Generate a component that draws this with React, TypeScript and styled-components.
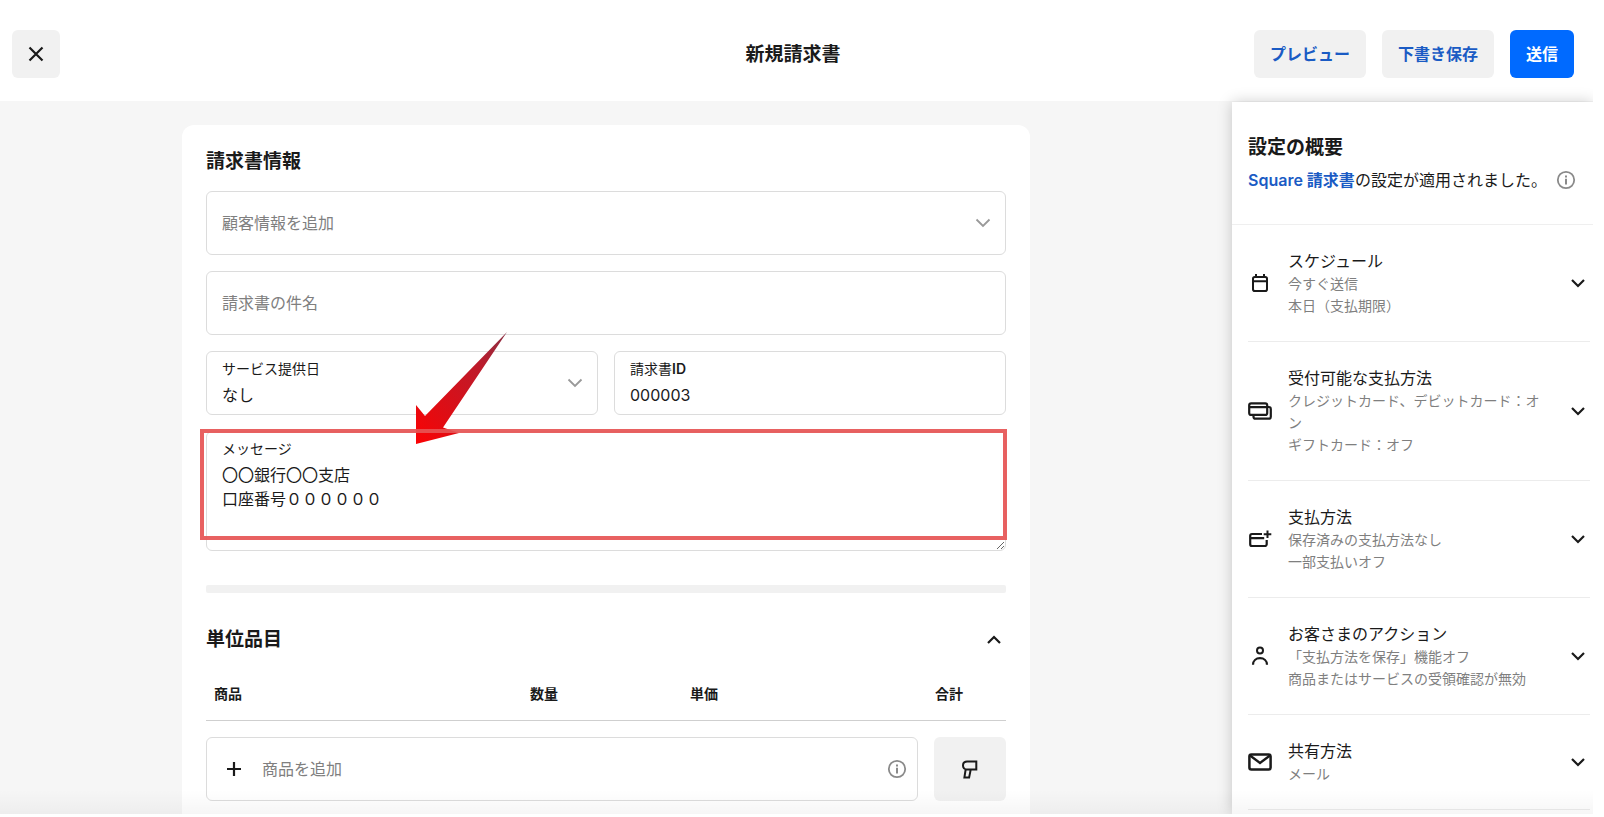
import React from "react";
import styled, { createGlobalStyle, css } from "styled-components";

const ink = "#1a1a1a";
const muted = "#7f7f7f";
const line = "#dcdcdc";
const link = "#1a5bc4";

const GlobalStyle = createGlobalStyle`
  *, *::before, *::after { box-sizing: border-box; }
  body {
    margin: 0;
    background: #fff;
    color: ${ink};
    font-family: Inter, "Noto Sans CJK JP", sans-serif;
    font-size: 16px;
    line-height: 24px;
  }
  h1, h2, p { margin: 0; }
  button, input, select, textarea { font: inherit; color: inherit; }
`;

const Page = styled.div`
  position: relative;
  display: flex;
  flex-direction: column;
  height: calc(100vh - 3px);
  margin-right: 11px;
  overflow: hidden;
`;

const Header = styled.header`
  display: grid;
  grid-template-columns: 1fr auto 1fr;
  align-items: center;
  flex: none;
  padding: 30px 19px 23px 12px;
`;

const Title = styled.h1`
  padding-top: 2px;
  font-size: 19px;
  font-weight: 700;
  line-height: 28px;
`;

const Actions = styled.div`
  display: flex;
  justify-content: flex-end;
  gap: 16px;
`;

const Button = styled.button<{ $primary?: boolean; $square?: boolean }>`
  display: flex;
  align-items: center;
  justify-content: center;
  height: 48px;
  padding: 0 16px;
  border: 0;
  border-radius: 6px;
  background: ${(p) => (p.$primary ? "#006aff" : "#f1f1f1")};
  color: ${(p) => (p.$primary ? "#fff" : link)};
  font-weight: 600;
  white-space: nowrap;
  ${(p) =>
    p.$square &&
    css`
      width: 48px;
      padding: 0;
      color: ${ink};
    `}
`;

const Body = styled.div`
  display: flex;
  flex: 1;
  min-height: 0;
  background: #f6f6f6;
`;

const Main = styled.main`
  flex: 1;
  min-width: 0;
  padding: 24px 20px 0 0;
`;

const Card = styled.div`
  max-width: 848px;
  min-height: 100%;
  margin: 0 auto;
  padding: 24px;
  border-radius: 12px;
  background: #fff;
`;

const SectionTitle = styled.h2`
  font-size: 19px;
  font-weight: 700;
  line-height: 26px;
`;

const Fields = styled.div`
  display: grid;
  grid-template-columns: 1fr 1fr;
  gap: 16px;
  margin-top: 16px;
`;

const Field = styled.div<{ $wide?: boolean }>`
  display: flex;
  align-items: center;
  grid-column: ${(p) => (p.$wide ? "1 / -1" : "auto")};
  height: 64px;
  padding: 0 14px 0 15px;
  border: 1px solid ${line};
  border-radius: 6px;
  background: #fff;
`;

const FieldText = styled.div`
  display: flex;
  flex: 1;
  flex-direction: column;
  gap: 4px;
  min-width: 0;
`;

const Label = styled.label`
  font-size: 14px;
  line-height: 20px;
`;

const LabelAccent = styled.span`
  font-weight: 600;
`;

const control = css`
  width: 100%;
  height: 24px;
  padding: 0;
  border: 0;
  outline: 0;
  background: transparent;
  line-height: 24px;
`;

const Input = styled.input`
  ${control}
  &::placeholder { color: ${muted}; opacity: 1; }
`;

const Select = styled.select<{ $empty?: boolean }>`
  ${control}
  appearance: none;
  color: ${(p) => (p.$empty ? muted : ink)};
`;

const MessageField = styled.div`
  position: relative;
  display: flex;
  flex-direction: column;
  grid-column: 1 / -1;
  padding-top: 7px;
  border: 1px solid ${line};
  border-radius: 6px;
`;

const MessageLabel = styled(Label)`
  padding: 0 15px;
`;

const Textarea = styled.textarea`
  display: block;
  width: 100%;
  height: 91px;
  padding: 4px 15px;
  border: 0;
  outline: 0;
  background: transparent;
  line-height: 24px;
  resize: vertical;
`;

const Highlight = styled.div`
  position: absolute;
  inset: -3px -2px 10px -7px;
  border: 4px solid rgba(230, 84, 84, 0.92);
  pointer-events: none;
`;

const Arrow = styled.svg`
  position: absolute;
  left: 208px;
  top: -101px;
  pointer-events: none;
`;

const Divider = styled.hr`
  height: 8px;
  margin: 34px 0;
  border: 0;
  border-radius: 2px;
  background: #f1f1f1;
`;

const SectionHead = styled.div`
  display: flex;
  align-items: center;
  justify-content: space-between;
`;

const IconButton = styled.button`
  display: flex;
  padding: 0;
  border: 0;
  background: none;
`;

const Table = styled.table`
  width: 100%;
  margin-top: 23px;
  border-collapse: collapse;
  table-layout: fixed;
`;

const Th = styled.th<{ $width?: number }>`
  width: ${(p) => (p.$width ? p.$width + "px" : "auto")};
  padding: 8px 8px 16px;
  border-bottom: 1px solid #cfcfcf;
  font-size: 14px;
  font-weight: 600;
  line-height: 20px;
  text-align: left;
`;

const AddRow = styled.div`
  display: flex;
  gap: 16px;
  margin-top: 16px;
`;

const AddField = styled(Field)`
  flex: 1;
  gap: 16px;
  padding: 0 10px 0 15px;
`;

const ScanButton = styled(Button)`
  width: 72px;
  height: 64px;
  color: ${ink};
`;

const Sidebar = styled.aside`
  position: relative;
  flex: none;
  width: 361px;
  margin-top: 1px;
  background: #fff;
  box-shadow: 0 0 14px rgba(0, 0, 0, 0.2);
`;

const SidebarHead = styled.div`
  padding: 33px 17px 32px 16px;
  border-bottom: 1px solid #efefef;
`;

const Applied = styled.div`
  display: flex;
  align-items: center;
  justify-content: space-between;
  margin-top: 7px;
`;

const Link = styled.a`
  color: ${link};
  font-weight: 600;
  text-decoration: none;
`;

const Rows = styled.ul`
  margin: 0;
  padding: 0 3px 0 16px;
  list-style: none;
`;

const Row = styled.li`
  display: flex;
  align-items: center;
  gap: 16px;
  padding: 24px 0;
  border-bottom: 1px solid #ececec;
`;

const RowText = styled.div`
  flex: 1;
  min-width: 0;
`;

const RowDetail = styled.p`
  color: ${muted};
  font-size: 14px;
  line-height: 22px;
`;

const BottomFade = styled.div`
  position: absolute;
  inset: auto 0 0;
  height: 24px;
  background: linear-gradient(rgba(0, 0, 0, 0), rgba(0, 0, 0, 0.035));
  pointer-events: none;
`;

const Svg = styled.svg`
  display: block;
  flex: none;
  fill: none;
  stroke: currentColor;
  stroke-width: 2.2;
`;

function Icon({ children, size = 24, color }: { children: React.ReactNode; size?: number; color?: string }) {
  return (
    <Svg width={size} height={size} viewBox={`0 0 ${size} ${size}`} color={color} aria-hidden="true">
      {children}
    </Svg>
  );
}

const FieldChevron = () => (
  <Icon size={16} color="#999">
    <path d="M1.500 4.500 8 11l6.500-6.500" strokeWidth="1.800" />
  </Icon>
);

const InfoIcon = () => (
  <Icon size={20} color="#8a8a8a">
    <circle cx="10" cy="10" r="8.200" strokeWidth="1.800" />
    <path d="M10 8.800v5.700M10 5.400v2" strokeWidth="2" />
  </Icon>
);

const settings = [
  {
    title: "スケジュール",
    details: ["今すぐ送信", "本日（支払期限）"],
    icon: (
      <>
        <rect x="5" y="6" width="14" height="14" rx="1.800" strokeWidth="2" />
        <path d="M5 10.300h14M8 3v3M16 3v3" strokeWidth="2" />
      </>
    ),
  },
  {
    title: "受付可能な支払方法",
    details: ["クレジットカード、デビットカード：オン", "ギフトカード：オフ"],
    icon: (
      <>
        <rect x="1.200" y="4.300" width="18" height="11.600" rx="2" />
        <path d="M1.200 8.200h18M19.200 8h1.600a2 2 0 0 1 2 2v7.700a2 2 0 0 1-2 2H7.500a2 2 0 0 1-2-2V16" />
      </>
    ),
  },
  {
    title: "支払方法",
    details: ["保存済みの支払方法なし", "一部支払いオフ"],
    icon: (
      <>
        <path d="M14 7H4a1.800 1.800 0 0 0-1.800 1.800v8.400A1.800 1.800 0 0 0 4 19h12.900a1.800 1.800 0 0 0 1.800-1.800V13M2.200 11.200h14" />
        <path d="M19.500 3.500v7.600M15.700 7.300h7.600" strokeWidth="2" />
      </>
    ),
  },
  {
    title: "お客さまのアクション",
    details: ["「支払方法を保存」機能オフ", "商品またはサービスの受領確認が無効"],
    icon: (
      <>
        <circle cx="12" cy="6.500" r="3" strokeWidth="2" />
        <path d="M5 20.800c0-3.900 3-6.600 7-6.600s7 2.700 7 6.600" />
      </>
    ),
  },
  {
    title: "共有方法",
    details: ["メール"],
    icon: (
      <>
        <rect x="1.400" y="4.600" width="21.200" height="14.800" rx="2" strokeWidth="2.500" />
        <path d="M2 5.500 12 13l10-7.500" strokeWidth="2.300" />
      </>
    ),
  },
];

export default function App() {
  return (
    <>
      <GlobalStyle />
      <Page>
        <Header>
          <Button $square aria-label="閉じる">
            <Icon>
              <path d="M5.500 5.500l13 13M18.500 5.500l-13 13" />
            </Icon>
          </Button>
          <Title>新規請求書</Title>
          <Actions>
            <Button>プレビュー</Button>
            <Button>下書き保存</Button>
            <Button $primary>送信</Button>
          </Actions>
        </Header>
        <Body>
          <Main>
            <Card>
              <SectionTitle>請求書情報</SectionTitle>
              <Fields>
                <Field $wide>
                  <Select $empty aria-label="顧客情報" defaultValue="">
                    <option value="">顧客情報を追加</option>
                  </Select>
                  <FieldChevron />
                </Field>
                <Field $wide>
                  <Input aria-label="請求書の件名" placeholder="請求書の件名" />
                </Field>
                <Field>
                  <FieldText>
                    <Label htmlFor="service-date">サービス提供日</Label>
                    <Select id="service-date">
                      <option>なし</option>
                    </Select>
                  </FieldText>
                  <FieldChevron />
                </Field>
                <Field>
                  <FieldText>
                    <Label htmlFor="invoice-id">
                      請求書<LabelAccent>ID</LabelAccent>
                    </Label>
                    <Input id="invoice-id" defaultValue="000003" />
                  </FieldText>
                </Field>
                <MessageField>
                  <MessageLabel htmlFor="message">メッセージ</MessageLabel>
                  <Textarea id="message" defaultValue={"〇〇銀行〇〇支店\n口座番号００００００"} />
                  <Arrow width="94" height="114" viewBox="0 0 94 114" aria-hidden="true">
                    <defs>
                      <linearGradient id="arrow-fill" x1="1" y1="0" x2="0" y2="1">
                        <stop offset="0" stopColor="#8a3044" />
                        <stop offset="0.300" stopColor="#bd1b2b" />
                        <stop offset="0.750" stopColor="#e20c12" />
                        <stop offset="1" stopColor="#fb0204" />
                      </linearGradient>
                    </defs>
                    <path d="M92 1 28 96.500 44 102 1 113V74l9 11Z" fill="url(#arrow-fill)" />
                  </Arrow>
                  <Highlight />
                </MessageField>
              </Fields>
              <Divider />
              <SectionHead>
                <SectionTitle>単位品目</SectionTitle>
                <IconButton aria-label="単位品目を折りたたむ">
                  <Icon>
                    <path d="m6 15 6-6 6 6" />
                  </Icon>
                </IconButton>
              </SectionHead>
              <Table>
                <thead>
                  <tr>
                    <Th scope="col">商品</Th>
                    <Th scope="col" $width={160}>数量</Th>
                    <Th scope="col" $width={245}>単価</Th>
                    <Th scope="col" $width={79}>合計</Th>
                  </tr>
                </thead>
              </Table>
              <AddRow>
                <AddField>
                  <Icon>
                    <path d="M12 5v14M5 12h14" />
                  </Icon>
                  <Input aria-label="商品を追加" placeholder="商品を追加" />
                  <InfoIcon />
                </AddField>
                <ScanButton aria-label="バーコードをスキャン">
                  <Icon>
                    <path d="M9 4.500h9.300v8H9c-2.600 0-4-1.800-4-4s1.400-4 4-4ZM7.700 12.200 6.400 20.600h4.700l1.600-8" strokeWidth="2" />
                  </Icon>
                </ScanButton>
              </AddRow>
            </Card>
          </Main>
          <Sidebar>
            <SidebarHead>
              <SectionTitle>設定の概要</SectionTitle>
              <Applied>
                <p>
                  <Link href="#settings">Square 請求書</Link>の設定が適用されました。
                </p>
                <InfoIcon />
              </Applied>
            </SidebarHead>
            <Rows>
              {settings.map((s) => (
                <Row key={s.title}>
                  <Icon>{s.icon}</Icon>
                  <RowText>
                    <p>{s.title}</p>
                    {s.details.map((d) => (
                      <RowDetail key={d}>{d}</RowDetail>
                    ))}
                  </RowText>
                  <IconButton aria-label={`${s.title}を開く`}>
                    <Icon>
                      <path d="m6 9 6 6 6-6" />
                    </Icon>
                  </IconButton>
                </Row>
              ))}
            </Rows>
          </Sidebar>
        </Body>
        <BottomFade />
      </Page>
    </>
  );
}
